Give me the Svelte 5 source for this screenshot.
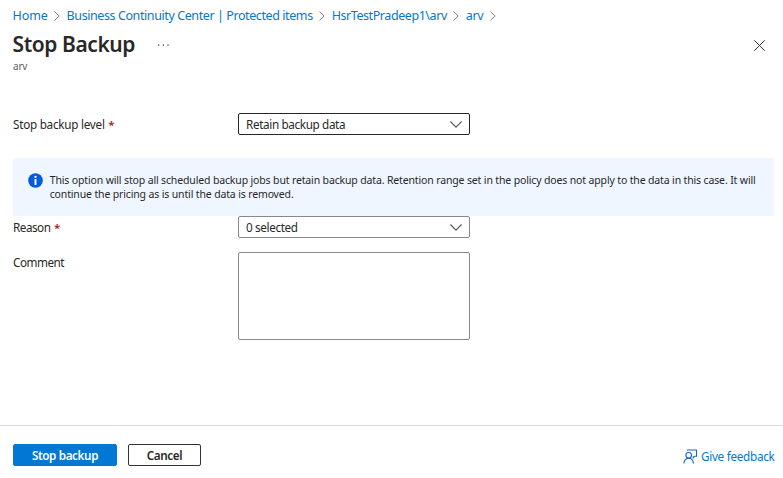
<script>
  const crumbs = [
    { text: 'Home', track: -0.1 },
    { text: 'Business Continuity Center | Protected items', track: -0.41 },
    { text: 'HsrTestPradeep1\\arv', track: -0.43 },
    { text: 'arv', track: -0.4 }
  ];
</script>

{#snippet chevron()}
  <svg width="12" height="7" viewBox="0 0 12 7"><path d="M.4.5 6 6.100 11.600.5" fill="none" stroke="#5a5856" stroke-width="1.100" /></svg>
{/snippet}

<main>
  <nav aria-label="Breadcrumb">
    {#each crumbs as crumb}
      <a href="#top" style="letter-spacing: {crumb.track}px">{crumb.text}</a>
      <svg width="6" height="10" viewBox="0 0 6 10"><path d="M.5.5 5.200 5 .5 9.500" fill="none" stroke="#767676" stroke-width=".9" /></svg>
    {/each}
  </nav>
  <header>
    <h1>Stop Backup</h1>
    <svg width="11" height="2" viewBox="0 0 11 2"><path d="M0 .5h1.200v1.200H0zM4.700.5h1.200v1.200H4.700zM9.400.5h1.200v1.200H9.400z" fill="#323130" /></svg>
    <button class="close" aria-label="Close">
      <svg width="11" height="11" viewBox="0 0 11 11"><path d="m.3.3 10.400 10.400M10.700.3.3 10.700" stroke="#323130" stroke-width="1" /></svg>
    </button>
  </header>
  <p class="sub">arv</p>

  <section class="form">
    <div class="row">
      <label for="level" class="level">Stop backup level<b>*</b></label>
      <button id="level" class="select dark"><span>Retain backup data</span>{@render chevron()}</button>
    </div>
    <div class="info">
      <svg width="15" height="15" viewBox="0 0 15 15"><circle cx="7.500" cy="7.500" r="7.300" fill="#015cda" /><circle cx="7.500" cy="3.900" r="1.150" fill="#fff" /><path d="M6.500 6h2v6h-2z" fill="#fff" /></svg>
      <p>This option will stop all scheduled backup jobs but retain backup data. Retention range set in the policy does not apply to the data in this case. It will<br />continue the pricing as is until the data is removed.</p>
    </div>
    <div class="row">
      <label for="reason">Reason<b>*</b></label>
      <button id="reason" class="select"><span>0 selected</span>{@render chevron()}</button>
    </div>
    <div class="row comment">
      <label for="comment">Comment</label>
      <textarea id="comment"></textarea>
    </div>
  </section>

  <footer>
    <button class="primary">Stop backup</button>
    <button class="plain">Cancel</button>
    <a href="#feedback">
      <svg width="15" height="15" viewBox="0 0 15 15" fill="none" stroke="#1267c4" stroke-width="1.100"><path d="M4 1h9.900M13.500 1v6.200h-1.600l-1.700 1.600V7.200" /><circle cx="5.700" cy="6.300" r="2.800" /><path d="M.8 14.500c.3-3.200 2.300-5.300 4.900-5.300s4.500 2.100 4.800 5.300" /></svg>
      <span>Give feedback</span>
    </a>
  </footer>
</main>

<style>
  :global(body) { margin: 0; background: #fff; }
  main { box-sizing: border-box; height: 478px; display: flex; flex-direction: column; font: 11.700px/16px 'Noto Sans', sans-serif; color: #292827; overflow: hidden; }
  a { color: #0078d4; text-decoration: none; }
  p { margin: 0; }
  svg { display: block; flex: none; }
  button { box-sizing: border-box; font: inherit; color: inherit; padding: 0; margin: 0; }
  nav { display: flex; align-items: center; height: 18px; padding: 7px 12.500px 0; font-size: 12.500px; gap: 6.480px; white-space: nowrap; }
  header { display: flex; align-items: center; height: 30px; margin-top: 5px; padding: 0 18px 0 12.500px; }
  h1 { margin: 0; width: 145.500px; font-size: 21px; line-height: 28px; padding-bottom: 2px; font-weight: 600; letter-spacing: -.42px; white-space: nowrap; }
  .close { margin-left: auto; border: 0; background: none; }
  .sub { font-size: 10px; line-height: 12px; padding-left: 13px; color: #605e5c; letter-spacing: -.2px; }
  .form { margin-top: 41px; flex: 1; }
  .row { display: flex; height: 22px; padding-left: 13px; }
  label { width: 225px; line-height: 23px; letter-spacing: -.48px; }
  .level { letter-spacing: -.25px; }
  b { color: #a4262c; font-weight: 600; margin-left: 3.500px; font-size: 11.500px; }
  .select { width: 232px; height: 22px; padding: 0 7px; border: 1px solid #8a8886; border-radius: 2px; background: #fff; display: flex; align-items: center; justify-content: space-between; letter-spacing: -.35px; }
  .dark { border-color: #292827; }
  .info { box-sizing: border-box; display: flex; gap: 7px; width: 761px; height: 58px; margin: 23px 0 0 13px; padding: 15px 0 0 15px; border-radius: 2px; background: #eff6ff; font-size: 10.500px; line-height: 14px; letter-spacing: -.146px; white-space: nowrap; }
  .info svg { margin-left: -.3px; }
  .comment { height: 88px; margin-top: 14px; }
  .comment label { line-height: 21px; }
  textarea { box-sizing: border-box; width: 232px; height: 88px; margin: 0; border: 1px solid #8a8886; border-radius: 2px; resize: none; background: #fff; }
  footer { box-sizing: border-box; height: 53px; border-top: 1px solid #dcdcdc; display: flex; align-items: flex-start; padding: 18px 8.500px 0 13px; }
  footer button { height: 22px; border: 1px solid #323130; border-radius: 2px; background: #fff; font-weight: 600; line-height: 18px; }
  footer .primary { width: 104px; background: #0078d4; border-color: #0078d4; color: #fff; letter-spacing: -.38px; }
  .plain { width: 73px; margin-left: 11px; letter-spacing: -.4px; }
  footer a { display: flex; align-items: center; gap: 2.500px; margin: 4px 0 0 auto; letter-spacing: -.27px; }
</style>
